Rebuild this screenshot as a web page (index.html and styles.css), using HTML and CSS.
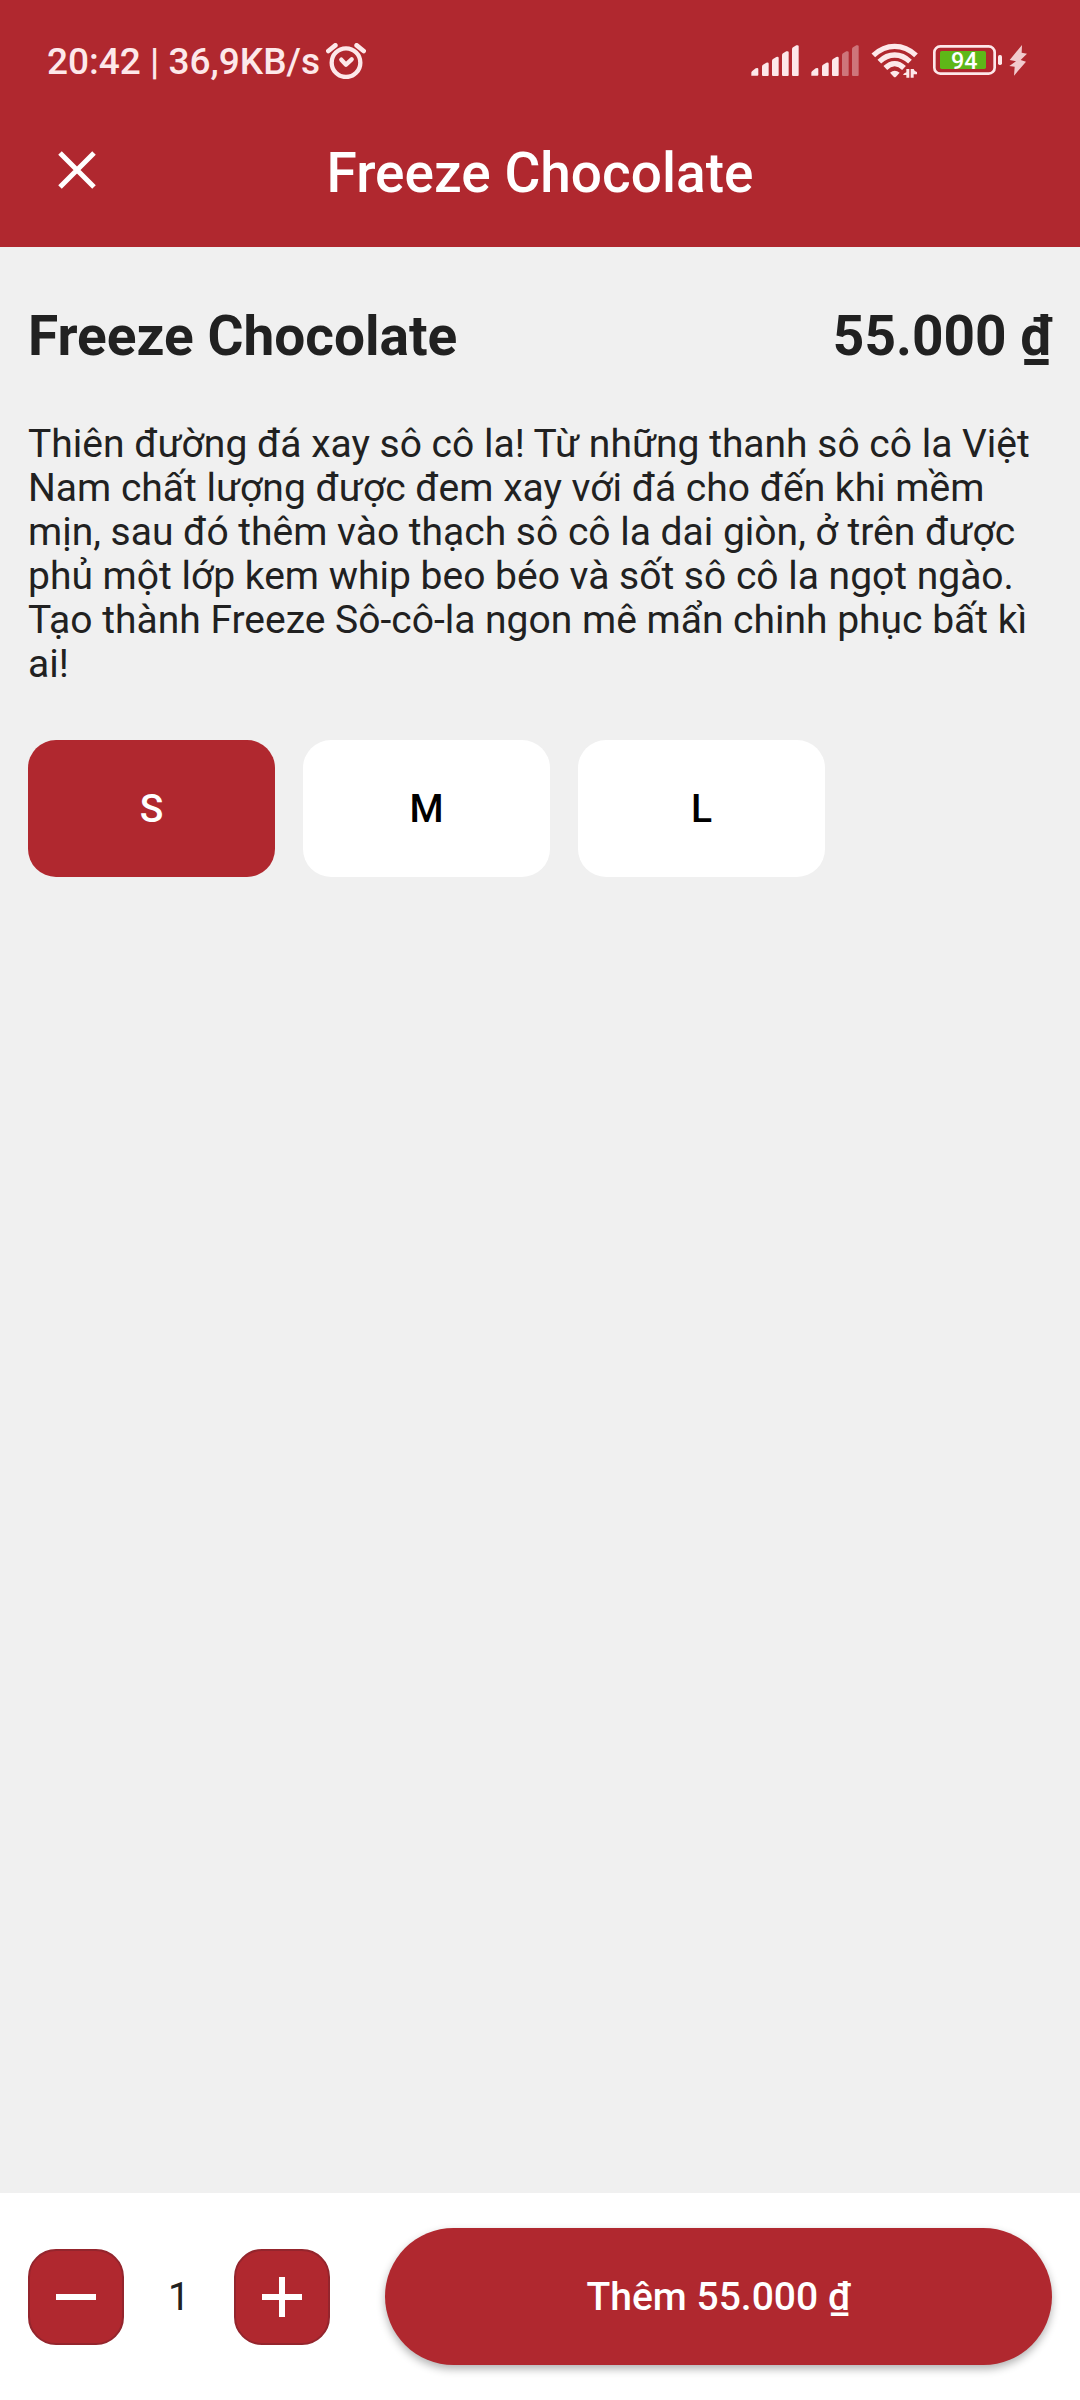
FILE: index.html
```html
<!DOCTYPE html>
<html lang="vi">
<head>
<meta charset="utf-8">
<meta name="viewport" content="width=device-width, initial-scale=1">
<title>Freeze Chocolate</title>
<link rel="stylesheet" href="styles.css">
</head>
<body>
<div class="screen">
  <header class="header">
    <div class="status">
      <span class="status-text">20:42 | 36,9KB/s</span>
      <svg class="alarm" viewBox="0 0 120 108" aria-hidden="true">
        <g fill="none" stroke="currentColor" stroke-linecap="round">
          <circle cx="60" cy="59" r="43" stroke-width="13"/>
          <path d="M7 24 28 7M92 7l21 17" stroke-width="14"/>
          <path d="m46 50 14 15 17-16" stroke-width="13" stroke-linejoin="round"/>
        </g>
      </svg>
      <div class="status-icons">
        <svg class="signal" viewBox="0 0 144 108" fill="currentColor" aria-hidden="true">
          <path d="M1 98V89Q1 87 3 85L14 76Q16 75 19 75Q22 75 22 78V95Q22 98 19 98Z"/>
          <path d="M33 96V71Q33 67 36 65L46 59Q53 57 53 62V96Q53 99 50 99H36Q33 99 33 96Z"/>
          <path d="M63 96V54Q63 50 66 48L76 42Q83 40 83 45V96Q83 99 80 99H66Q63 99 63 96Z"/>
          <path d="M93 96V37Q93 33 96 31L106 25Q113 23 113 28V96Q113 99 110 99H96Q93 99 93 96Z"/>
          <path d="M123 96V19Q123 15 126 13L136 7Q143 5 143 10V96Q143 99 140 99H126Q123 99 123 96Z"/>
        </svg>
        <svg class="signal" viewBox="0 0 144 108" fill="currentColor" aria-hidden="true">
          <path d="M1 98V89Q1 87 3 85L14 76Q16 75 19 75Q22 75 22 78V95Q22 98 19 98Z"/>
          <path d="M33 96V71Q33 67 36 65L46 59Q53 57 53 62V96Q53 99 50 99H36Q33 99 33 96Z"/>
          <path d="M63 96V54Q63 50 66 48L76 42Q83 40 83 45V96Q83 99 80 99H66Q63 99 63 96Z"/>
          <path opacity=".4" d="M93 96V37Q93 33 96 31L106 25Q113 23 113 28V96Q113 99 110 99H96Q93 99 93 96Z"/>
          <path opacity=".4" d="M123 96V19Q123 15 126 13L136 7Q143 5 143 10V96Q143 99 140 99H126Q123 99 123 96Z"/>
        </svg>
        <svg class="wifi" viewBox="0 0 147 108" aria-hidden="true">
          <g fill="none" stroke="currentColor" stroke-width="16">
            <path d="M7 37Q36 10 71 10T135 37"/>
            <path d="M25 56Q46 36 71 36T117 56"/>
            <path d="M43 75Q56 62 71 62T99 75"/>
          </g>
          <path fill="currentColor" d="M57 89Q71 77 86 89L75 101Q71 104 68 101Z"/>
          <path fill="currentColor" d="M106 78h9v26h-9v-8H96Q97 92 106 88ZM119 78h9Q130 85 138 87v7h-10v10h-9Z"/>
        </svg>
        <svg class="battery" viewBox="0 0 288 108" aria-label="94%">
          <rect x="7" y="10" width="181" height="82" rx="18" fill="none" stroke="currentColor" stroke-width="8"/>
          <rect x="24" y="24" width="138" height="54" rx="5" fill="#5eb718"/>
          <rect x="198" y="36" width="12" height="30" rx="5" fill="currentColor"/>
          <text x="97" y="78" class="battery-level" text-anchor="middle">94</text>
          <path fill="currentColor" opacity=".85" d="M270 6 233 51l19 4-20 14 16 2-2 27 36-42-16-5 19-19-16-3Z"/>
        </svg>
      </div>
    </div>
    <div class="appbar">
      <button class="close" type="button" aria-label="Đóng">
        <svg viewBox="0 0 40 40" aria-hidden="true"><path d="M3 3 37 37M37 3 3 37" fill="none" stroke="currentColor" stroke-width="5"/></svg>
      </button>
      <h1 class="title">Freeze Chocolate</h1>
    </div>
  </header>

  <main class="content">
    <div class="product">
      <h2 class="name">Freeze Chocolate</h2>
      <span class="price">55.000 ₫</span>
    </div>
    <p class="description">Thiên đường đá xay sô cô la! Từ những thanh sô cô la Việt Nam chất lượng được đem xay với đá cho đến khi mềm mịn, sau đó thêm vào thạch sô cô la dai giòn, ở trên được phủ một lớp kem whip beo béo và sốt sô cô la ngọt ngào. Tạo thành Freeze Sô-cô-la ngon mê mẩn chinh phục bất kì ai!</p>
    <div class="sizes">
      <button class="size size-selected" type="button" aria-pressed="true">S</button>
      <button class="size" type="button" aria-pressed="false">M</button>
      <button class="size" type="button" aria-pressed="false">L</button>
    </div>
  </main>

  <footer class="footer">
    <div class="stepper">
      <button class="step" type="button" aria-label="Giảm">
        <svg viewBox="0 0 40 40" aria-hidden="true"><path d="M0 20H40" stroke="currentColor" stroke-width="6"/></svg>
      </button>
      <output class="quantity">1</output>
      <button class="step" type="button" aria-label="Tăng">
        <svg viewBox="0 0 40 40" aria-hidden="true"><path d="M0 20H40M20 0V40" stroke="currentColor" stroke-width="6"/></svg>
      </button>
    </div>
    <button class="add" type="button">Thêm 55.000 ₫</button>
  </footer>
</div>
</body>
</html>
```
FILE: styles.css
```css
:root {
  --red: #b0282f;
  --ink: #212121;
  --page: #f0f0f0;
  --status: #fde8ea;
}

* {
  box-sizing: border-box;
}

body {
  margin: 0;
  font-family: Roboto, "Noto Sans", sans-serif;
  font-size: 39px;
  color: var(--ink);
  background: var(--page);
}

button {
  margin: 0;
  padding: 0;
  border: 0;
  font: inherit;
  color: inherit;
  cursor: pointer;
}

svg {
  display: block;
  flex: none;
}

.screen {
  display: flex;
  flex-direction: column;
  min-height: 100vh;
}

.header {
  background: var(--red);
  color: #fff;
}

.status {
  display: flex;
  align-items: center;
  height: 93px;
  padding: 28px 52px 0 47px;
  color: var(--status);
}

.status-text {
  padding-top: 2px;
  font-size: 37px;
  font-weight: 500;
  line-height: 44px;
}

.alarm {
  width: 40px;
  height: 36px;
  margin-left: 6px;
}

.status-icons {
  display: flex;
  gap: 12px;
  margin-left: auto;
}

.signal {
  width: 48px;
  height: 36px;
}

.wifi {
  width: 49px;
  height: 36px;
}

.battery {
  width: 96px;
  height: 36px;
}

.battery-level {
  font-size: 70px;
  font-weight: 500;
  fill: #fff;
}

.appbar {
  display: grid;
  grid-template-columns: 154px 1fr 154px;
  align-items: center;
  height: 154px;
}

.close {
  display: grid;
  place-items: center;
  height: 154px;
  background: none;
}

.close svg {
  width: 40px;
  height: 40px;
}

.title {
  margin: 0;
  padding-top: 5px;
  font-size: 55px;
  font-weight: 500;
  line-height: 64px;
  text-align: center;
}

.content {
  flex: 1;
  padding: 57px 28px;
}

.product {
  display: flex;
  justify-content: space-between;
  font-size: 55px;
  font-weight: 700;
  line-height: 64px;
}

.name {
  margin: 0;
  font: inherit;
}

.description {
  margin: 54px 0;
  line-height: 44px;
}

.sizes {
  display: flex;
  gap: 28px;
}

.size {
  width: 247px;
  height: 137px;
  border-radius: 28px;
  background: #fff;
  color: #000;
  font-weight: 500;
}

.size-selected {
  background: var(--red);
  color: #fff;
}

.footer {
  display: flex;
  align-items: center;
  gap: 55px;
  padding: 35px 28px;
  background: #fff;
}

.stepper {
  display: flex;
  align-items: center;
}

.step {
  display: grid;
  place-items: center;
  width: 96px;
  height: 96px;
  border: 2px solid #94252d;
  border-radius: 28px;
  background: var(--red);
  color: #fff;
}

.step svg {
  width: 40px;
  height: 40px;
}

.quantity {
  width: 110px;
  text-align: center;
}

.add {
  flex: 1;
  height: 137px;
  border-radius: 69px;
  background: var(--red);
  color: #fff;
  font-weight: 500;
  box-shadow: 0 4px 8px rgba(0, 0, 0, 0.3);
}
```
